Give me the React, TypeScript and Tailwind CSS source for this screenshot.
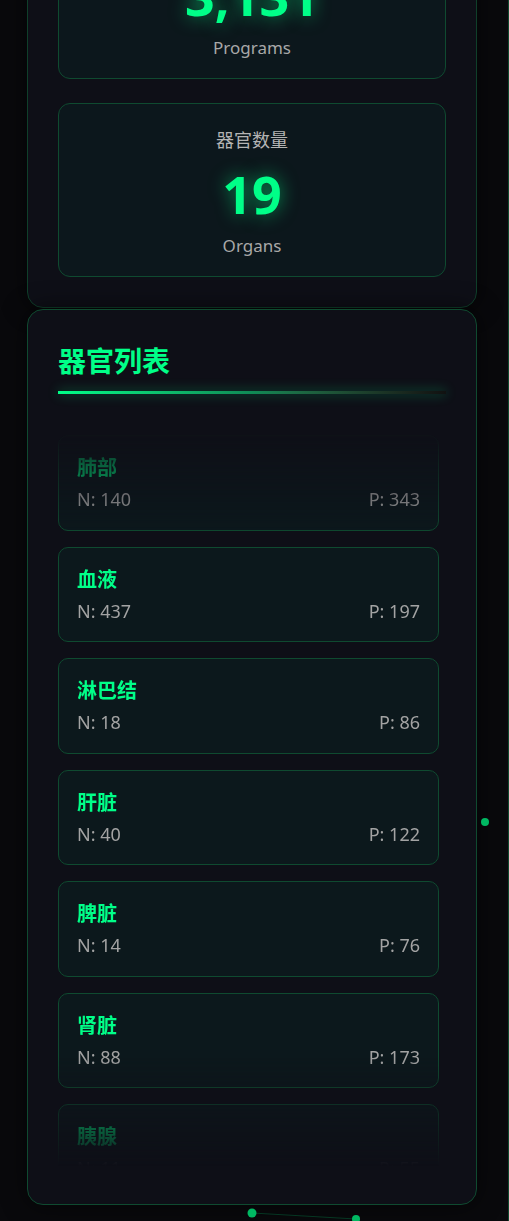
const organs = [
  { name: "肺部", n: 140, p: 343 },
  { name: "血液", n: 437, p: 197 },
  { name: "淋巴结", n: 18, p: 86 },
  { name: "肝脏", n: 40, p: 122 },
  { name: "脾脏", n: 14, p: 76 },
  { name: "肾脏", n: 88, p: 173 },
  { name: "胰腺", n: 11, p: 55 },
];

const stats = [
  { label: "程序数量", value: "3,131", sub: "Programs" },
  { label: "器官数量", value: "19", sub: "Organs" },
];

const font = "font-['Noto_Sans','Noto_Sans_CJK_SC',sans-serif]";

const StatCard = ({ label, value, sub }: { label: string; value: string; sub: string }) => (
  <div className="flex h-[174px] flex-col items-center rounded-[12px] border border-[#0f4a30] bg-[#0c171c] pt-[24px] pb-[20px]">
    <div className="text-[18px] leading-[24px] text-[#b4b4b4]">{label}</div>
    <div className="mt-[10px] text-[52px] font-bold leading-[64px] text-[#00ff88] [text-shadow:0_0_18px_rgba(0,255,136,0.55)]">
      {value}
    </div>
    <div className="mt-[8px] text-[17px] leading-[24px] text-[#a8a8a8]">{sub}</div>
  </div>
);

const OrganItem = ({ name, n, p }: { name: string; n: number; p: number }) => (
  <div className="shrink-0 rounded-[10px] border border-[#0f4a30] bg-[#0c181c] px-[18px] pt-[18px] pb-[16.5px]">
    <div className="text-[20px] font-bold leading-[28px] text-[#00ff88]">{name}</div>
    <div className="mt-[4px] flex justify-between text-[18px] leading-[27px] text-[#a3a3a3]">
      <span>N: {n}</span>
      <span>P: {p}</span>
    </div>
  </div>
);

export default function App() {
  return (
    <div className={`relative h-[1221px] w-[509px] overflow-hidden bg-[#09090c] ${font}`}>
      <div className="absolute top-0 bottom-0 left-[508px] w-px bg-[#0f4a30]" />

      <div className="ml-[27px] mt-[-126px] flex w-[450px] flex-col gap-px">
        <section className="rounded-[16px] border border-[#0f3f2a] bg-[#0e0f17] p-[30px] shadow-[0_0_24px_rgba(0,0,0,0.6)]">
          <div className="flex flex-col gap-[24px]">
            {stats.map((s) => (
              <StatCard key={s.sub} {...s} />
            ))}
          </div>
        </section>

        <section className="rounded-[16px] border border-[#0f4a30] bg-[#0e0f17] px-[30px] pt-[30px] pb-[38px] shadow-[0_0_24px_rgba(0,0,0,0.6)]">
          <h2 className="text-[28px] font-bold leading-[42px] text-[#00ff88]">器官列表</h2>
          <div className="mt-[9px] h-[3px] w-full bg-gradient-to-r from-[#00ff88] via-[#0f8a55] to-[#111] shadow-[0_0_12px_rgba(0,255,136,0.45)]" />

          <div className="mt-[30px] h-[742px] overflow-hidden pr-[7px] pt-[11px] [mask-image:linear-gradient(to_bottom,transparent_6px,black_110px,black_calc(100%_-_110px),transparent_100%)]">
            <div className="flex flex-col gap-[16px]">
              {organs.map((o) => (
                <OrganItem key={o.name} {...o} />
              ))}
            </div>
          </div>
        </section>
      </div>

      <svg className="pointer-events-none absolute inset-0" width="509" height="1221">
        <line x1="252" y1="1213" x2="356" y2="1219" stroke="#00c46a" strokeOpacity="0.25" strokeWidth="1" />
        <circle cx="485" cy="822" r="4" fill="#00b862" />
        <circle cx="252" cy="1213" r="4.5" fill="#00b862" />
        <circle cx="356" cy="1219" r="4" fill="#00b862" />
      </svg>
    </div>
  );
}
